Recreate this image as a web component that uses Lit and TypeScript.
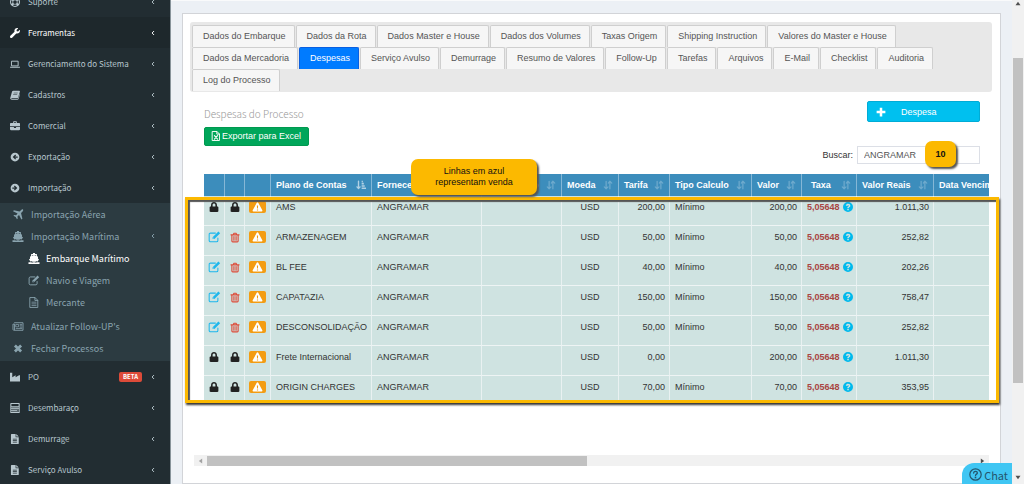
import { LitElement, html, svg, css, nothing, TemplateResult } from "lit";
import { customElement, property } from "lit/decorators.js";
import { classMap } from "lit/directives/class-map.js";

/* Icons: each is drawn on a 16 x 16 grid and takes the current text colour. */
const line = (d: string, w = 1.6) =>
  svg`<path d=${d} fill="none" stroke="currentColor" stroke-width=${w} stroke-linejoin="round" stroke-linecap="round"></path>`;
const solid = (d: string) => svg`<path d=${d} fill="currentColor" fill-rule="evenodd"></path>`;

const ICONS: Record<string, TemplateResult> = {
  support: svg`${solid("M8 0a8 8 0 100 16A8 8 0 008 0zm0 5a3 3 0 110 6 3 3 0 010-6z")}
    <path d="M5.2 1.8l1 2.4a4.300 4.300 0 013.600 0l1-2.400M5.200 14.200l1-2.400a4.300 4.300 0 003.600 0l1 2.400M1.800 5.200l2.400 1a4.300 4.300 0 000 3.600l-2.400 1M14.200 5.200l-2.400 1a4.300 4.300 0 010 3.600l2.400 1" fill="#222d32"></path>`,
  wrench: svg`<g transform="scale(.03125)">${solid(
    "M507.73 109.1c-2.24-9.03-13.54-12.09-20.12-5.51l-74.36 74.36-67.88-11.31-11.31-67.88 74.36-74.36c6.62-6.62 3.43-17.9-5.66-20.16-47.38-11.74-99.55.91-136.58 37.93-39.64 39.64-50.55 97.1-34.05 147.2L18.74 402.76c-24.99 24.99-24.99 65.51 0 90.5 24.99 24.99 65.51 24.99 90.5 0l213.21-213.21c50.12 16.71 107.47 5.68 147.37-34.22 37.07-37.07 49.7-89.32 37.91-136.73z"
  )}</g>`,
  laptop: svg`${line("M3 3.500h10v7.500H3z", 1.5)}${solid("M0 12.200h16v.800c0 .700-.800 1-1.500 1h-13C.800 14 0 13.700 0 13z")}`,
  book: svg`${solid("M5.200 1h9.500c.900 0 1.400.700 1.100 1.600l-2.800 9.200c-.300.900-1 1.400-1.900 1.400H2.800c-.500 0-.700.300-.600.600.1.400.5.600 1 .600h8.600c.600 0 1-.300 1.200-.800L15.600 6l.400.800-2.300 7.400c-.300.900-1.100 1.300-1.900 1.300H3C1.300 15.500 0 14.200.4 12.700L3.300 2.500C3.600 1.500 4.300 1 5.200 1zM6 4.200l-.3.900h6.500l.3-.9zM5.200 6.800l-.3.900h6.500l.3-.9z")}`,
  briefcase: svg`${solid("M5 3V2c0-.800.700-1.500 1.500-1.500h3c.800 0 1.500.700 1.500 1.500v1h3.500C15.300 3 16 3.700 16 4.500V8.500H0v-4C0 3.700.7 3 1.500 3zm1.300 0h3.400V1.900H6.300zM0 9.500h6.300V11h3.400V9.500H16v3.700c0 .800-.700 1.500-1.500 1.500h-13C.700 14.700 0 14 0 13.200z")}`,
  back: solid("M8 1a7 7 0 100 14A7 7 0 008 1zm4.300 6v2H8.200l1.600 1.600-1.400 1.400L4.300 8l4.100-4 1.400 1.400L8.200 7z"),
  forward: solid("M8 1a7 7 0 110 14A7 7 0 018 1zM3.700 7v2h4.100l-1.600 1.600L7.600 12l4.100-4-4.100-4-1.400 1.400L7.800 7z"),
  plane: solid("M15.300.700c.600.600.200 2.200-.900 3.200l-2 2 2 8.300-1.500 1.200-3.400-6.600-2.300 2.200.4 2.800-1.100 1-1.800-3.300L1.400 9.700l1-1.100 2.800.400 2.200-2.300L.8 3.300 2 1.800l8.300 2 2-2c1-1.100 2.400-1.700 3-1.100z"),
  ship: solid("M6.500 0h3v1.500h2.700v3l1.600.8V8.500l1.500.6-1.900 3.300c-.6 0-1-.5-1.600-.5-1 0-1.300 1-2.300 1H6.500c-1 0-1.300-1-2.300-1-.6 0-1 .5-1.600.5L.7 9.100l1.500-.6V5.300l1.600-.8v-3h2.700zM5.200 3v1.100L8 3l2.800 1.100V3zM0 13.500h4l1.200.7 1.300-.7h3l1.300.7 1.200-.7h4V16H0z"),
  edit: svg`${line("M12.500 9.500v3c0 1-.7 1.800-1.700 1.800H2.700c-1 0-1.800-.8-1.800-1.800V4.600c0-1 .8-1.800 1.800-1.800h6.500", 1.400)}${solid("M13.200.8l2.300 2.300-7.600 7.600H5.500V8.400zM6.800 8.700l-.5.5v.8h.8l.5-.5z")}`,
  fileLine: svg`${line("M2.500.8h7l4 4v10.400h-11zM9.300 1v4h4", 1.300)}${line("M5 7.500h6M5 10h6M5 12.500h6", 1.100)}`,
  news: svg`${line("M3 2.500h12.300v11H2c-.800 0-1.300-.500-1.300-1.300V4.500H3v8", 1.300)}${line("M5.300 5h3.500v3.500H5.300zM11 5h2.500M11 7h2.500M11 9h2.500M5.300 11h8.200", 1.100)}`,
  close: svg`<path d="M3.500 3.500l9 9M12.500 3.500l-9 9" stroke="currentColor" stroke-width="4" fill="none"></path>`,
  factory: solid("M0 1h3.600v7.500L9 5v3.500L14.500 5H16v10H0z"),
  calculator: solid("M1.500 0h13c.600 0 1 .400 1 1v14c0 .600-.400 1-1 1h-13c-.600 0-1-.400-1-1V1c0-.600.400-1 1-1zm.700 1.700V5h11.600V1.700zm0 5v1.800h2V6.700zm3.200 0v1.800h2V6.700zm3.200 0v1.800h2V6.700zm3.200 0v1.800h2V6.700zm-9.600 3v1.800h2V9.700zm3.200 0v1.800h2V9.700zm3.200 0v1.800h2V9.700zm-6.400 3v1.800h2v-1.800zm3.200 0v1.800h2v-1.800zm3.200 0v1.800h2v-1.800zm3.200-3v4.800h2V9.700z"),
  file: solid("M2.500 0H9v5h5v10c0 .600-.400 1-1 1H2.500c-.600 0-1-.400-1-1V1c0-.600.400-1 1-1zM10 0l4 4h-4zM4.500 7.500v1.200H11V7.500zm0 2.500v1.200H11V10zm0 2.500v1.200H11v-1.200z"),
  excel: svg`${line("M2.500.8h7l4 4v10.400h-11zM9.300 1v4h4", 1.500)}${line("M5.500 7.500l5 5.500M10.500 7.500l-5 5.500", 1.800)}`,
  plus: solid("M6 1h4v5h5v4h-5v5H6v-5H1V6h5z"),
  lock: svg`<g transform="translate(1 0) scale(.03125)">${solid(
    "M400 224h-24v-72C376 68.200 307.800 0 224 0S72 68.200 72 152v72H48c-26.500 0-48 21.500-48 48v192c0 26.500 21.500 48 48 48h352c26.500 0 48-21.500 48-48V272c0-26.500-21.500-48-48-48zm-104 0H152v-72c0-39.700 32.300-72 72-72s72 32.300 72 72v72z"
  )}</g>`,
  trash: svg`${line("M3 4v9.700c0 .800.500 1.300 1.200 1.300h7.600c.700 0 1.200-.500 1.200-1.300V4M1.500 3.700h13M5.500 3.500L6.200 1.200h3.600l.7 2.300", 1.800)}${line("M5.900 6.500v6M8 6.500v6M10.100 6.500v6", 1.300)}`,
  warning: solid("M8 .500c.500 0 .900.300 1.200.700l6.500 12c.500 1-.100 2.100-1.200 2.100h-13C.400 15.300-.200 14.200.3 13.200l6.500-12C7.100.800 7.500.5 8 .500zM7 5.500l.3 5h1.400l.3-5zm0 6.300v1.900h2v-1.900z"),
  question: solid("M8 0a8 8 0 100 16A8 8 0 008 0zM4.500 5.600C5 3.900 6.300 2.900 8.200 2.900c2 0 3.500 1.200 3.500 2.900 0 1.400-.700 2-1.700 2.700-.700.500-.800.700-.800 1.400H6.900c0-1.400.4-2 1.500-2.700.7-.5 1-.800 1-1.300 0-.600-.500-.900-1.200-.900-.800 0-1.200.400-1.500 1.300zM6.900 11h2.300v2.200H6.900z"),
  questionLine: svg`<circle cx="8" cy="8" r="7" fill="none" stroke="currentColor" stroke-width="1.500"></circle>${line("M5.700 6.200c.1-1.400 1-2.100 2.300-2.100s2.300.8 2.300 1.900C10.300 7.500 8 7.600 8 9.300", 1.600)}${solid("M7 10.700h2v2H7z")}`,
  angle: line("M10 3.500L5.500 8l4.500 4.500", 2.600),
  sort: svg`${line("M5 2v12M2 11l3 3 3-3M11 14V2M8.500 5L11 2l3 3", 2)}`,
  sortAsc: svg`${line("M4 2v11M1.500 11L4 13.500 6.500 11", 2.200)}${solid("M9 1h2v2.500H9zM9 4.500h3.500V7H9zM9 8.200h5v2.500H9zM9 12h7v2.500H9z")}`,
};

const icon = (name: string, cls = "") =>
  html`<svg class="icon ${cls}" viewBox="0 0 16 16" aria-hidden="true">${ICONS[name]}</svg>`;

const iconStyles = css`
  .icon {
    width: 10px;
    height: 10px;
    flex: none;
    display: block;
  }
  a {
    color: inherit;
    text-decoration: none;
  }
  * {
    box-sizing: border-box;
  }
`;

interface Item {
  label: string;
  icon: string;
  active?: boolean;
  beta?: boolean;
  arrow?: boolean;
  children?: Item[];
}

const MENU: Item[] = [
  { label: "Suporte", icon: "support", arrow: true },
  { label: "Ferramentas", icon: "wrench", arrow: true, active: true },
  { label: "Gerenciamento do Sistema", icon: "laptop", arrow: true },
  { label: "Cadastros", icon: "book", arrow: true },
  { label: "Comercial", icon: "briefcase", arrow: true },
  { label: "Exportação", icon: "back", arrow: true },
  {
    label: "Importação",
    icon: "forward",
    arrow: true,
    children: [
      { label: "Importação Aérea", icon: "plane" },
      {
        label: "Importação Marítima",
        icon: "ship",
        arrow: true,
        children: [
          { label: "Embarque Marítimo", icon: "ship", active: true },
          { label: "Navio e Viagem", icon: "edit" },
          { label: "Mercante", icon: "fileLine" },
        ],
      },
      { label: "Atualizar Follow-UP's", icon: "news" },
      { label: "Fechar Processos", icon: "close" },
    ],
  },
  { label: "PO", icon: "factory", arrow: true, beta: true },
  { label: "Desembaraço", icon: "calculator", arrow: true },
  { label: "Demurrage", icon: "file", arrow: true },
  { label: "Serviço Avulso", icon: "file", arrow: true },
];

@customElement("side-menu")
class SideMenu extends LitElement {
  static styles = [
    iconStyles,
    css`
      :host {
        display: block;
        overflow: hidden;
        background: #222d32;
        border-right: 1px solid #87939a;
        color: #b8c7ce;
        font-family: "Noto Sans CJK SC", "Open Sans", sans-serif;
        font-size: 8px;
      }
      ul {
        list-style: none;
        margin: 0;
        padding: 0;
      }
      .menu {
        margin-top: -14px;
      }
      .link {
        display: flex;
        align-items: center;
        gap: 8px;
        height: 31px;
        padding: 0 14px 0 10px;
        white-space: nowrap;
      }
      .label {
        flex: 1;
      }
      .active {
        background: #1e282c;
        color: #fff;
      }
      .sub {
        background: #2c3b41;
        color: #8aa4af;
        padding: 0 0 2px;
        font-size: 9px;
      }
      .sub .link {
        height: 22px;
        gap: 7px;
        padding-left: 12px;
      }
      .sub .icon {
        width: 12px;
        height: 11px;
      }
      .sub .sub .link {
        padding-left: 28px;
        gap: 6px;
      }
      .sub .active {
        background: none;
        color: #fff;
      }
      .link .arrow {
        width: 6px;
        height: 8px;
      }
      .beta {
        background: #dd4b39;
        color: #fff;
        font-size: 6px;
        font-weight: 700;
        line-height: 10px;
        padding: 0 4px;
        border-radius: 2px;
      }
    `,
  ];

  private item(i: Item): TemplateResult {
    return html`<li>
      <a href="#" class=${classMap({ link: true, active: !!i.active })}>
        ${icon(i.icon)}<span class="label">${i.label}</span>
        ${i.beta ? html`<span class="beta">BETA</span>` : nothing}
        ${i.arrow ? icon("angle", "arrow") : nothing}
      </a>
      ${i.children ? html`<ul class="sub">${i.children.map((c) => this.item(c))}</ul>` : nothing}
    </li>`;
  }

  render() {
    return html`<nav><ul class="menu">${MENU.map((i) => this.item(i))}</ul></nav>`;
  }
}

interface Column {
  label: string;
  width: number;
  align?: string;
  sort?: string;
}

const COLUMNS: Column[] = [
  { label: "", width: 21 },
  { label: "", width: 20 },
  { label: "", width: 26 },
  { label: "Plano de Contas", width: 101, sort: "sortAsc" },
  { label: "Fornecedor", width: 110, sort: "sort" },
  { label: "Observação", width: 80, sort: "sort" },
  { label: "Moeda", width: 57, align: "center", sort: "sort" },
  { label: "Tarifa", width: 51, align: "right", sort: "sort" },
  { label: "Tipo Calculo", width: 82, sort: "sort" },
  { label: "Valor", width: 50, align: "right", sort: "sort" },
  { label: "Taxa", width: 55, align: "rate", sort: "sort" },
  { label: "Valor Reais", width: 77, align: "right", sort: "sort" },
  { label: "Data Vencimento", width: 100, sort: "sort" },
];

interface Row {
  locked: boolean;
  account: string;
  fee: string;
  calc: string;
  value: string;
  total: string;
}

const ROWS: Row[] = [
  { locked: true, account: "AMS", fee: "200,00", calc: "Mínimo", value: "200,00", total: "1.011,30" },
  { locked: false, account: "ARMAZENAGEM", fee: "50,00", calc: "Mínimo", value: "50,00", total: "252,82" },
  { locked: false, account: "BL FEE", fee: "40,00", calc: "Mínimo", value: "40,00", total: "202,26" },
  { locked: false, account: "CAPATAZIA", fee: "150,00", calc: "Mínimo", value: "150,00", total: "758,47" },
  { locked: false, account: "DESCONSOLIDAÇÃO", fee: "50,00", calc: "Mínimo", value: "50,00", total: "252,82" },
  { locked: true, account: "Frete Internacional", fee: "0,00", calc: "", value: "200,00", total: "1.011,30" },
  { locked: true, account: "ORIGIN CHARGES", fee: "70,00", calc: "Mínimo", value: "70,00", total: "353,95" },
];

@customElement("expense-table")
class ExpenseTable extends LitElement {
  @property({ attribute: false }) rows: Row[] = [];

  static styles = [
    iconStyles,
    css`
      :host {
        display: block;
        overflow: hidden;
        color: #333;
      }
      .table {
        width: 830px;
        table-layout: fixed;
        border-collapse: separate;
        border-spacing: 0;
        line-height: 12px;
        white-space: nowrap;
      }
      th {
        height: 22px;
        padding: 0 5px;
        background: #3c8dbc;
        color: #fff;
        text-align: left;
        border-right: 1px solid #85b7d6;
      }
      td {
        height: 30px;
        padding: 5px 5px 0 5px;
        vertical-align: top;
        background: #cfe3e1;
        border-right: 1px solid #e9f1f1;
        border-bottom: 1px solid #eef4f4;
      }
      tr:last-child td {
        height: 28px;
      }
      .head {
        display: flex;
        align-items: center;
        justify-content: space-between;
      }
      .head .icon {
        opacity: 0.25;
      }
      .head .sortAsc {
        opacity: 0.6;
      }
      th.rate {
        padding-left: 9px;
      }
      td.center {
        text-align: center;
      }
      td.right {
        text-align: right;
        padding-right: 4px;
      }
      td.tool {
        padding: 5px 0 0;
      }
      .action {
        display: flex;
        justify-content: center;
        align-items: center;
        width: 100%;
        height: 12px;
        padding: 0;
        border: 0;
        background: none;
        color: #222;
      }
      .action .lock {
        width: 10px;
        height: 10px;
      }
      .action .edit {
        width: 13px;
        height: 12px;
        color: #1eb7ec;
      }
      .action .trash {
        height: 11px;
        color: #dd4b39;
      }
      .warn {
        width: 17px;
        margin: 0 auto;
        border-radius: 2px;
        background: #f39c12;
        color: #fff;
      }
      .warn .icon {
        width: 11px;
        height: 10px;
      }
      .pair {
        display: flex;
        align-items: center;
        gap: 3px;
        color: #a94442;
        font-weight: 700;
      }
      .pair .icon {
        color: #00b9ec;
      }
    `,
  ];

  private action(name: string, label: string) {
    return html`<td class="tool"><button class="action" aria-label=${label}>${icon(name, name)}</button></td>`;
  }

  render() {
    return html`<table class="table">
      <colgroup>
        ${COLUMNS.map((c) => html`<col style="width:${c.width}px" />`)}
      </colgroup>
      <thead>
        <tr>
          ${COLUMNS.map(
            (c) => html`<th class=${c.align ?? ""} scope="col">
              <div class="head"><span>${c.label}</span>${c.sort ? icon(c.sort, c.sort) : nothing}</div>
            </th>`
          )}
        </tr>
      </thead>
      <tbody>
        ${this.rows.map(
          (r) => html`<tr>
            ${this.action(r.locked ? "lock" : "edit", "Editar")}
            ${this.action(r.locked ? "lock" : "trash", "Excluir")}
            <td class="tool"><button class="action warn" aria-label="Aviso">${icon("warning")}</button></td>
            <td>${r.account}</td>
            <td>ANGRAMAR</td>
            <td></td>
            <td class="center">USD</td>
            <td class="right">${r.fee}</td>
            <td>${r.calc}</td>
            <td class="right">${r.value}</td>
            <td><div class="pair"><span>5,05648</span>${icon("question")}</div></td>
            <td class="right">${r.total}</td>
            <td></td>
          </tr>`
        )}
      </tbody>
    </table>`;
  }
}

const TABS = [
  ["Dados do Embarque", "Dados da Rota", "Dados Master e House", "Dados dos Volumes", "Taxas Origem", "Shipping Instruction", "Valores do Master e House"],
  ["Dados da Mercadoria", "Despesas", "Serviço Avulso", "Demurrage", "Resumo de Valores", "Follow-Up", "Tarefas", "Arquivos", "E-Mail", "Checklist", "Auditoria"],
  ["Log do Processo"],
];

@customElement("app-root")
class AppRoot extends LitElement {
  static styles = [
    iconStyles,
    css`
      :host {
        display: grid;
        grid-template-columns: 171px minmax(0, 1fr) 12px;
        height: 100vh;
        overflow: hidden;
        position: relative;
        font-family: "Liberation Sans", Arial, sans-serif;
        font-size: 9px;
        color: #333;
      }
      button,
      input {
        font: inherit;
      }
      .main {
        background: #ecf0f5;
        border-top: 1px solid #f9fafb;
        padding: 12px 11px 0;
        overflow: hidden;
      }
      .panel {
        min-height: 100%;
        background: #fff;
        border: 1px solid #d2d4d8;
        padding: 8px 8px 0 7px;
      }
      .tabs {
        background: #e8e8e8;
        border-radius: 3px;
        padding: 3px 2px 1px;
      }
      .tabrow {
        display: flex;
        gap: 1px;
      }
      .tab {
        height: 22px;
        padding: 0 8px 2px 10px;
        border: 1px solid #cfcfcf;
        border-bottom: 0;
        border-radius: 2px 2px 0 0;
        background: #f6f6f6;
        color: #555;
        white-space: nowrap;
      }
      .tab.current {
        background: #007bff;
        border-color: #0a5fe0;
        color: #fff;
      }
      .tools {
        display: flex;
        justify-content: space-between;
        padding: 9px 12px 10px 14px;
      }
      .title {
        margin: 5px 0 6px;
        font-family: "Noto Sans CJK SC", "Open Sans", sans-serif;
        font-size: 10px;
        font-weight: 300;
        line-height: 15px;
        color: #999;
      }
      .btn {
        display: flex;
        align-items: center;
        border: 1px solid;
        border-radius: 2px;
        color: #fff;
      }
      .excel {
        height: 19px;
        gap: 1px;
        padding: 0 7px 1px 6px;
        background: #00a65a;
        border-color: #00994f;
      }
      .add {
        width: 113px;
        height: 21px;
        gap: 15px;
        padding: 0 8px;
        background: #00c0ef;
        border-color: #00acd6;
      }
      .right {
        display: flex;
        flex-direction: column;
        align-items: flex-end;
        gap: 24px;
      }
      .search {
        display: flex;
        align-items: center;
        gap: 4px;
        position: relative;
      }
      .field {
        width: 123px;
        height: 18px;
        padding: 0 6px;
        border: 1px solid #dcdfe6;
        color: #555;
        background: #fff;
      }
      .note {
        position: absolute;
        display: grid;
        place-items: center;
        text-align: center;
        background: #fcb900;
        color: #111;
        border-radius: 7px;
        box-shadow: 2px 2px 2px #555;
      }
      .step {
        top: -5px;
        right: 24px;
        width: 31px;
        height: 26px;
        font-weight: 700;
      }
      .legend {
        z-index: 1;
        top: -15px;
        left: 207px;
        width: 126px;
        height: 36px;
        line-height: 11px;
      }
      .area {
        position: relative;
        margin: 0 3px 0 14px;
      }
      .frame {
        position: absolute;
        inset: 23px -10px 1px -19px;
        border: 3px solid #fcb900;
        box-shadow: 1px 2px 2px #333, inset 2px 2px 1px #555;
        pointer-events: none;
      }
      .hbar {
        display: flex;
        align-items: center;
        gap: 4px;
        height: 11px;
        margin: 51px 3px 0 4px;
        padding: 0 4px;
        background: #f1f1f1;
      }
      .thumb {
        flex: 382;
        height: 10px;
        background: #c1c1c1;
      }
      .track {
        flex: 387;
      }
      .tri {
        flex: none;
        width: 5px;
        height: 6px;
        color: #a3a3a3;
      }
      .dark {
        color: #505050;
      }
      .vbar {
        display: flex;
        flex-direction: column;
        align-items: center;
        background: #f1f1f1;
        padding: 0 1px;
      }
      .vbar .tri {
        width: 6px;
        height: 5px;
        margin: 1px 0 4px;
      }
      .grow {
        flex: 52;
      }
      .vthumb {
        flex: 352;
        width: 100%;
        background: #c1c1c1;
      }
      .rest {
        flex: 99;
      }
      .chat {
        position: absolute;
        right: 12px;
        bottom: 0;
        display: flex;
        align-items: center;
        gap: 2px;
        height: 21px;
        padding: 2px 4px 0 7px;
        border: 0;
        border-radius: 12px 0 0 0;
        background: #40c6f3;
        color: #24566e;
        font-family: "Noto Sans CJK SC", "Open Sans", sans-serif;
        font-size: 11px;
      }
      .chat .icon {
        width: 13px;
        height: 13px;
      }
    `,
  ];

  private tri(d: string, cls = "") {
    return html`<svg class="tri ${cls}" viewBox="0 0 6 6" aria-hidden="true"><path d=${d} fill="currentColor"></path></svg>`;
  }

  render() {
    return html`
      <side-menu></side-menu>
      <main class="main">
        <section class="panel">
          <div class="tabs" role="tablist">
            ${TABS.map(
              (row) => html`<div class="tabrow">
                ${row.map(
                  (t) => html`<button role="tab" class=${classMap({ tab: true, current: t === "Despesas" })}>${t}</button>`
                )}
              </div>`
            )}
          </div>
          <div class="tools">
            <div>
              <h4 class="title">Despesas do Processo</h4>
              <button class="btn excel">${icon("excel")}Exportar para Excel</button>
            </div>
            <div class="right">
              <button class="btn add">${icon("plus")}Despesa</button>
              <div class="search">
                <label for="search">Buscar:</label>
                <input id="search" class="field" type="text" value="ANGRAMAR" />
                <span class="note step">10</span>
              </div>
            </div>
          </div>
          <div class="area">
            <expense-table .rows=${ROWS}></expense-table>
            <div class="frame"></div>
            <div class="note legend">Linhas em azul<br />representam venda</div>
          </div>
          <div class="hbar">
            ${this.tri("M5 0v6L1 3z")}
            <div class="thumb"></div>
            <div class="track"></div>
            ${this.tri("M1 0v6l4-3z", "dark")}
          </div>
        </section>
      </main>
      <div class="vbar">
        ${this.tri("M0 5h6L3 1z", "dark")}
        <div class="grow"></div>
        <div class="vthumb"></div>
        <div class="rest"></div>
        ${this.tri("M0 1h6L3 5z", "dark")}
      </div>
      <button class="chat">${icon("questionLine")}Chat</button>
    `;
  }
}
